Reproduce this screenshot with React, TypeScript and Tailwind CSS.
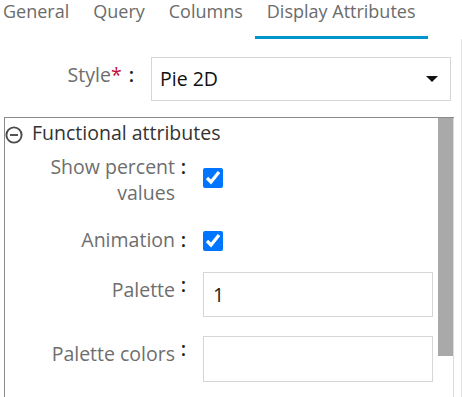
const tabs = [
  { name: "General", active: false },
  { name: "Query", active: false },
  { name: "Columns", active: false },
  { name: "Display Attributes", active: true },
];

function Colon() {
  return <span className="absolute right-[17px] top-0 text-[#222] font-semibold">:</span>;
}

function Label({ text, className = "" }: { text: string; className?: string }) {
  return (
    <div className={`relative w-[198px] shrink-0 pr-[28px] text-right leading-[26px] text-[#6e6e6e] ${className}`}>
      {text}
      <Colon />
    </div>
  );
}

export default function App() {
  return (
    <div className="w-[462px] h-[397px] overflow-hidden bg-white font-['Open_Sans',sans-serif] text-[19.5px]">
      {/* Tabs */}
      <div className="flex h-[39px]">
        {tabs.map((t, i) => (
          <div
            key={t.name}
            className={`${i === 0 ? "pl-[3px]" : "pl-3"} pr-3 h-[39px] text-[18px] leading-[23px] text-[#6b6b6b] ${t.active ? "border-b-[3px] border-[#0096cc]" : ""}`}
          >
            {t.name}
          </div>
        ))}
      </div>

      <div className="w-[462px] h-[358px] border-r border-[#e3e3e3] pt-[18px]">
        {/* Style */}
        <div className="flex items-center">
          <div className="w-[151px] shrink-0 pr-[17px] text-right text-[#6e6e6e] -mt-[9px]">
            Style<span className="text-[#c0103a]">*</span>
            <span className="ml-[7px] text-[#222] font-semibold">:</span>
          </div>
          <div className="w-[300px] h-[44px] border border-[#d6d6d6] flex items-center justify-between pl-[8px] pr-[12px] text-[#111]">
            <span>Pie 2D</span>
            <svg width="12" height="6" viewBox="0 0 12 6">
              <path d="M0 0h12L6 6z" fill="#111" />
            </svg>
          </div>
        </div>

        {/* Panel */}
        <div className="ml-[4px] mt-[16px] w-[450px] h-[300px] border-l border-t border-[#8a8a8a] flex">
          <div className="flex-1">
            <div className="h-[30px] flex items-center text-[#333]">
              <svg width="18" height="18" viewBox="0 0 18 18" className="mt-[3px] shrink-0">
                <circle cx="9" cy="9" r="7.6" fill="none" stroke="#4a4a4a" strokeWidth="1.9" />
                <line x1="5" y1="9" x2="13" y2="9" stroke="#4a4a4a" strokeWidth="1.9" />
              </svg>
              <span className="ml-[9px]">Functional attributes</span>
            </div>

            <div className="flex items-start mt-[6px]">
              <Label text="Show percent values" />
              <input type="checkbox" defaultChecked className="w-[20px] h-[20px] mt-[14px]" />
            </div>

            <div className="flex items-start mt-[21px]">
              <Label text="Animation" />
              <input type="checkbox" defaultChecked className="w-[20px] h-[20px] mt-[4px]" />
            </div>

            <div className="flex items-start mt-[19px]">
              <Label text="Palette" className="pt-[5px]" />
              <div className="w-[230px] h-[45px] border border-[#d6d6d6] pl-[9px] flex items-center text-[#222]">
                1
              </div>
            </div>

            <div className="flex items-start mt-[19px]">
              <Label text="Palette colors" className="pt-[5px]" />
              <div className="w-[230px] h-[46px] border border-[#d6d6d6]" />
            </div>
          </div>
          <div className="w-[16px] shrink-0 border-r border-[#dcdcdc]">
            <div className="h-[238px] w-[15px] bg-[#a9a9a9]" />
          </div>
        </div>
      </div>
    </div>
  );
}
